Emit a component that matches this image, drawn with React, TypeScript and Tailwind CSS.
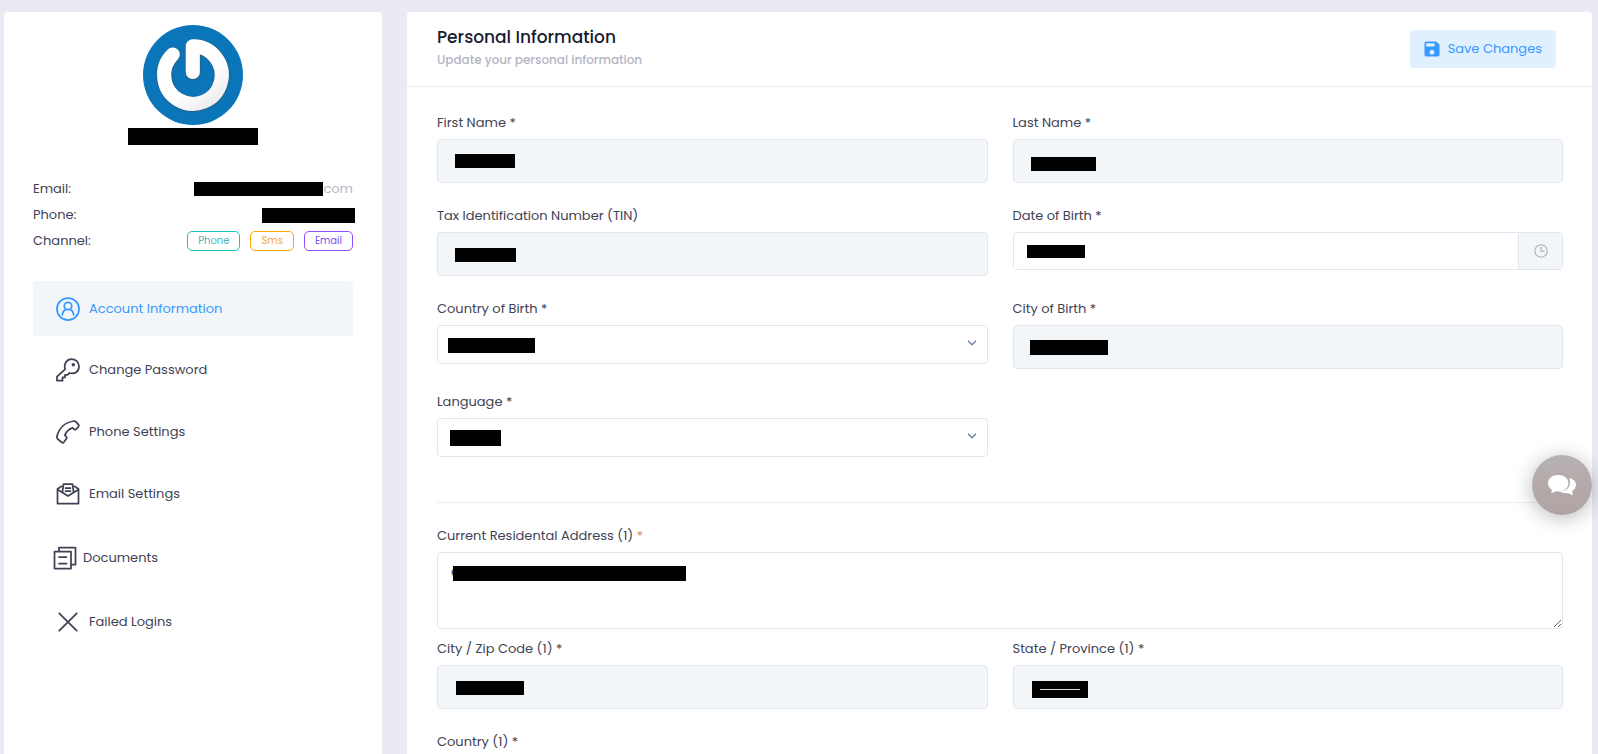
import { useId, type ReactNode } from "react";
import { MdSave } from "react-icons/md";

const stroke = {
  fill: "none",
  stroke: "currentColor",
  strokeWidth: 1.75,
  strokeLinejoin: "round" as const,
  strokeLinecap: "round" as const,
};

function Icon({ children }: { children: ReactNode }) {
  return (
    <svg viewBox="0 0 24 24" className="size-6 shrink-0" aria-hidden="true" {...stroke}>
      {children}
    </svg>
  );
}

function Logo() {
  return (
    <svg viewBox="0 0 100 100" className="size-[100px]" role="img" aria-label="Avatar">
      <defs>
        <linearGradient id="ring" x1="0.3" y1="0.2" x2="0.9" y2="1">
          <stop offset="0.5" stopColor="#ffffff" />
          <stop offset="1" stopColor="#ececf0" />
        </linearGradient>
        <filter id="soft" x="-20%" y="-20%" width="140%" height="140%">
          <feDropShadow dx="0.4" dy="0.6" stdDeviation="0.9" floodColor="#3c4a58" floodOpacity="0.8" />
        </filter>
      </defs>
      <circle cx="50" cy="50" r="50" fill="#0a76b9" />
      <path
        d="M49.800 47V21.200A28.800 28.800 0 1 1 29.700 29.500"
        fill="none"
        stroke="url(#ring)"
        strokeWidth="14"
        strokeLinecap="round"
        strokeLinejoin="round"
        filter="url(#soft)"
      />
    </svg>
  );
}

const nav = [
  {
    label: "Account Information",
    active: true,
    icon: (
      <Icon>
        <circle cx="12" cy="12" r="11" />
        <circle cx="12" cy="9" r="3.700" />
        <path d="M6.400 17.800c.3-3 1.800-4.600 3.500-5.200M17.600 17.800c-.3-3-1.800-4.600-3.500-5.200" />
      </Icon>
    ),
  },
  {
    label: "Change Password",
    icon: (
      <Icon>
        <path d="M9 11.300C7.800 5.500 10.700 1 15.500 1A7.500 7.500 0 0 1 23 8.500c0 5-4.300 8-9.500 6.500l-2 1.900H9v2.500H6.500v3.300H1v-4z" />
        <circle cx="17.300" cy="6.700" r="0.900" fill="currentColor" />
      </Icon>
    ),
  },
  {
    label: "Phone Settings",
    icon: (
      <Icon>
        <path d="M18.300 1c.8 0 1.300.3 1.800.9l2.300 2.700c.7.9.6 1.500 0 2.200l-2.300 2.300c-.7.7-1.500.7-2.200 0l-1.300-1.200c-3.300.9-6 3.500-7.800 7.200l1.500 1.600c.6.7.6 1.300.1 2l-2.500 3.400c-.7.8-1.500.9-2.200.2L1.600 19c-.6-.8-.8-1.700-.6-2.800C3 8.500 9 2.200 18.300 1z" />
      </Icon>
    ),
  },
  {
    label: "Email Settings",
    icon: (
      <Icon>
        <path d="M5.500 4.300L1.500 7v14.500h21V7l-4-2.700M1.500 7.500l10.500 6.500 10.500-6.500M6.500 9.800L7.500 2h9l1 7.800M9.500 6h5M9.500 9h5" />
      </Icon>
    ),
  },
  {
    label: "Documents",
    compact: true,
    icon: (
      <Icon>
        <path d="M1.500 5.500h16.500v17H1.500zM6 5V1.500h16.500v17h-4M6 11h7.500M6 17.500h7.500" />
      </Icon>
    ),
  },
  {
    label: "Failed Logins",
    icon: (
      <Icon>
        <path d="M3.300 3.300l17.400 17.400M20.700 3.300L3.300 20.700" />
      </Icon>
    ),
  },
];

const label = "text-[13px] leading-5 text-[#3f4254]";
const control = "block w-full rounded border border-[#e4e6ef] text-[13px] text-[#3f4254] outline-none";

function Field({
  title,
  kind = "readonly",
  mask,
  children,
}: {
  title: string;
  kind?: "readonly" | "date" | "select";
  mask?: string;
  children?: ReactNode;
}) {
  const id = useId();
  return (
    <div className="flex flex-col gap-[6px]">
      <label htmlFor={id} className={label}>
        {title}
      </label>
      <div className="relative">
        {kind === "readonly" && (
          <input id={id} readOnly className={`${control} h-11 bg-[#f3f6f9] px-4`} />
        )}
        {kind === "select" && (
          <>
            <select id={id} className={`${control} h-[39px] appearance-none bg-white px-3`} />
            <svg
              viewBox="0 0 10 6"
              className="pointer-events-none absolute top-[15px] right-[11px] h-[6px] w-[10px] text-[#6c7f99]"
              fill="none"
              stroke="currentColor"
              strokeWidth="1.300"
              aria-hidden="true"
            >
              <path d="M1 .8l4 4 4-4" />
            </svg>
          </>
        )}
        {kind === "date" && (
          <div className="flex h-[38px] overflow-hidden rounded border border-[#e4e6ef]">
            <input id={id} className="min-w-0 flex-1 bg-white px-3 text-[13px] outline-none" />
            <button
              type="button"
              aria-label="Pick a date"
              className="flex w-11 items-center justify-center border-l border-[#e4e6ef] bg-[#f3f6f9] text-[#b5b5c3]"
            >
              <svg viewBox="0 0 14 14" className="size-[14px]" fill="none" stroke="currentColor" strokeWidth="1.300" aria-hidden="true">
                <circle cx="7" cy="7" r="6.200" />
                <path d="M7 3v4.200h3.500" />
              </svg>
            </button>
          </div>
        )}
        {mask && <span className={`absolute bg-black ${mask}`}>{children}</span>}
      </div>
    </div>
  );
}

function Sidebar() {
  return (
    <aside className="flex w-[378px] shrink-0 flex-col rounded-t bg-white px-[29px] pt-[13px]">
      <div className="flex flex-col items-center gap-[3px]">
        <Logo />
        <span className="h-[17px] w-[130px] bg-black" />
      </div>
      <dl className="mt-[31px] flex flex-col text-[13px] text-[#3f4254]">
        <div className="flex h-[26px] items-center justify-between">
          <dt>Email:</dt>
          <dd className="flex items-center text-[#b5b5c3]">
            <span className="h-[14px] w-[129px] bg-black" />
            com
          </dd>
        </div>
        <div className="flex h-[26px] items-center justify-between">
          <dt>Phone:</dt>
          <dd className="-mr-0.5 h-[15px] w-[93px] bg-black" />
        </div>
        <div className="flex h-[26px] items-center justify-between">
          <dt>Channel:</dt>
          <dd className="flex gap-[10px] text-[10px] leading-[18px]">
            <span className="rounded-[5px] border border-[#1bc5bd] px-[10px] text-[#4fb3bf]">Phone</span>
            <span className="rounded-[5px] border border-[#ffa800] px-[10px] text-[#f3a64a]">Sms</span>
            <span className="rounded-[5px] border border-[#8950fc] px-[10px] text-[#7a50fc]">Email</span>
          </dd>
        </div>
      </dl>
      <nav className="mt-[27px] flex flex-col gap-[6px] text-[13px]">
        {nav.map((item) => (
          <a
            key={item.label}
            href="#"
            aria-current={item.active ? "page" : undefined}
            className={`flex items-center rounded ${item.compact ? "h-[60px] gap-[6px] pl-5" : "gap-[9px] pl-[23px]"} ${
              item.active ? "h-[55px] bg-[#f3f6f9] text-[#3699ff]" : "h-14 text-[#3f4254]"
            }`}
          >
            {item.icon}
            {item.label}
          </a>
        ))}
      </nav>
    </aside>
  );
}

export default function App() {
  return (
    <div className="flex h-screen items-stretch gap-[25px] overflow-hidden bg-[#e9eaf4] pt-3 pr-[6px] pl-1 font-[Poppins,Inter,sans-serif]">
      <Sidebar />
      <main className="min-w-0 flex-1 rounded-t bg-white">
        <header className="flex h-[75px] items-start justify-between border-b border-[#ebedf3] pr-9 pl-[30px]">
          <div className="pt-[13px]">
            <h1 className="text-[17px] leading-[25px] font-medium text-[#181c32]">Personal Information</h1>
            <p className="text-xs leading-5 font-medium text-[#b5b5c3]">Update your personal information</p>
          </div>
          <button
            type="button"
            className="mt-[18px] flex h-[38px] items-center gap-[6px] rounded bg-[#e1f0ff] pr-[14px] pl-3 text-[13px] text-[#3699ff]"
          >
            <MdSave className="size-5" />
            Save Changes
          </button>
        </header>
        <form className="pt-[26px] pr-[29px] pl-[30px]">
          <div className="grid grid-cols-2 gap-x-[25px] gap-y-[23px] border-b border-[#ebedf3] pb-[45px]">
            <Field title="First Name *" mask="top-[15px] left-[18px] h-[14px] w-[60px]" />
            <Field title="Last Name *" mask="top-[18px] left-[18px] h-[14px] w-[65px]" />
            <Field title="Tax Identification Number (TIN)" mask="top-4 left-[18px] h-[14px] w-[61px]" />
            <Field title="Date of Birth *" kind="date" mask="top-[13px] left-[14px] h-[13px] w-[58px]" />
            <Field title="Country of Birth *" kind="select" mask="top-[13px] left-[11px] h-[15px] w-[87px]" />
            <Field title="City of Birth *" mask="top-[15px] left-[17px] h-[15px] w-[78px]" />
            <Field title="Language *" kind="select" mask="top-[12px] left-[13px] h-4 w-[51px]" />
          </div>
          <div className="flex flex-col gap-[6px] pt-[23px]">
            <label htmlFor="address" className={label}>
              Current Residental Address (1) <span className="text-[#e08a3c]">*</span>
            </label>
            <div className="relative">
              <textarea
                id="address"
                defaultValue="C"
                className={`${control} h-[77px] bg-white px-[13px] py-[10px]`}
              />
              <span className="absolute top-[14px] left-4 h-[15px] w-[233px] bg-black" />
            </div>
          </div>
          <div className="grid grid-cols-2 gap-x-[25px] gap-y-[23px] pt-[10px]">
            <Field title="City / Zip Code (1) *" mask="top-4 left-[19px] h-[14px] w-[68px]" />
            <Field title="State / Province (1) *" mask="top-4 left-[19px] h-[17px] w-14 px-2 pt-2">
              <span className="block border-t border-white/85" />
            </Field>
            <Field title="Country (1) *" kind="select" />
          </div>
        </form>
      </main>
      <button
        type="button"
        aria-label="Open chat"
        className="fixed top-[455px] right-[6px] flex size-[60px] items-center justify-center rounded-full bg-linear-to-b from-[#b7b1b2] to-[#b0a2a2] text-white shadow-[0_3px_20px_rgba(0,0,0,0.28)]"
      >
        <svg viewBox="0 0 28 20" className="h-5 w-7" fill="currentColor" aria-hidden="true">
          <path d="M10.200 0C4.500 0 0 3.500 0 8.300c0 2.700 1.500 4.900 3.700 6.500.3 1-.1 2.300-.9 3.300 1.900-.2 3.600-1 4.700-1.800.9.200 1.800.3 2.700.3 5.700 0 10.200-3.500 10.200-8.300S15.900 0 10.200 0z" />
          <path d="M21.300 3c4 .9 6.700 3.700 6.700 6.900 0 2.500-1.500 4.600-3.800 6-.2 1.200.3 2.700 1.100 4.100-2.200-.2-3.800-.9-4.900-2-3.300.5-6.400-.1-8.800-1.300 6-.3 10.400-3.700 10.400-8.600 0-1.900-.3-3.600-.7-5.100z" />
        </svg>
      </button>
    </div>
  );
}
